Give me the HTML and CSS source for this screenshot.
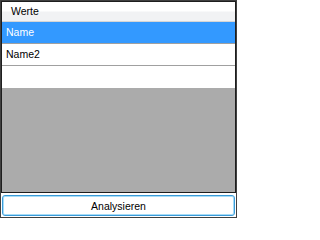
FILE: index.html
```html
<!DOCTYPE html>
<html>
<head>
<meta charset="utf-8">
<link rel="stylesheet" href="styles.css">
</head>
<body>
<div class="frame">
  <div class="grid">
    <div class="header">Werte</div>
    <div class="row selected">Name</div>
    <div class="row">Name2</div>
    <div class="row newrow"></div>
  </div>
  <button class="btn">Analysieren</button>
</div>
</body>
</html>
```

FILE: styles.css
```css
html, body {
  margin: 0;
  padding: 0;
  background: #ffffff;
}
.frame {
  box-sizing: border-box;
  width: 237px;
  height: 218px;
  border: 1px solid #404040;
  background: #ffffff;
  display: flex;
  flex-direction: column;
  font-family: "Liberation Sans", Arial, sans-serif;
  font-size: 10.5px;
  color: #000;
}
.grid {
  box-sizing: border-box;
  height: 192px;
  border: 1px solid #1e1e1e;
  border-bottom-width: 1px;
  background: #ababab;
  display: flex;
  flex-direction: column;
}
.header {
  height: 19px;
  line-height: 19px;
  padding-left: 9px;
  background: linear-gradient(#ffffff 0%, #ffffff 45%, #f1f2f4 55%, #f1f2f4 100%);
  border-bottom: 1px solid #d5d5d5;
}
.row {
  height: 21px;
  line-height: 21px;
  padding-left: 4px;
  background: #ffffff;
  border-bottom: 1px solid #a0a0a0;
}
.row.selected {
  background: #3399ff;
  color: #ffffff;
}
.row.newrow {
  height: 22px;
  border-bottom: none;
}
.btn {
  box-sizing: border-box;
  margin: 2px 1px 1px 1px;
  height: 21px;
  padding: 0;
  border: 1px solid #3a9bd9;
  border-radius: 3px;
  box-shadow: inset 0 0 0 1px #a6dcf7;
  background: #ffffff;
  font-family: "Liberation Sans", Arial, sans-serif;
  font-size: 10.5px;
  color: #000;
  text-align: center;
  line-height: 18px;
}
```
